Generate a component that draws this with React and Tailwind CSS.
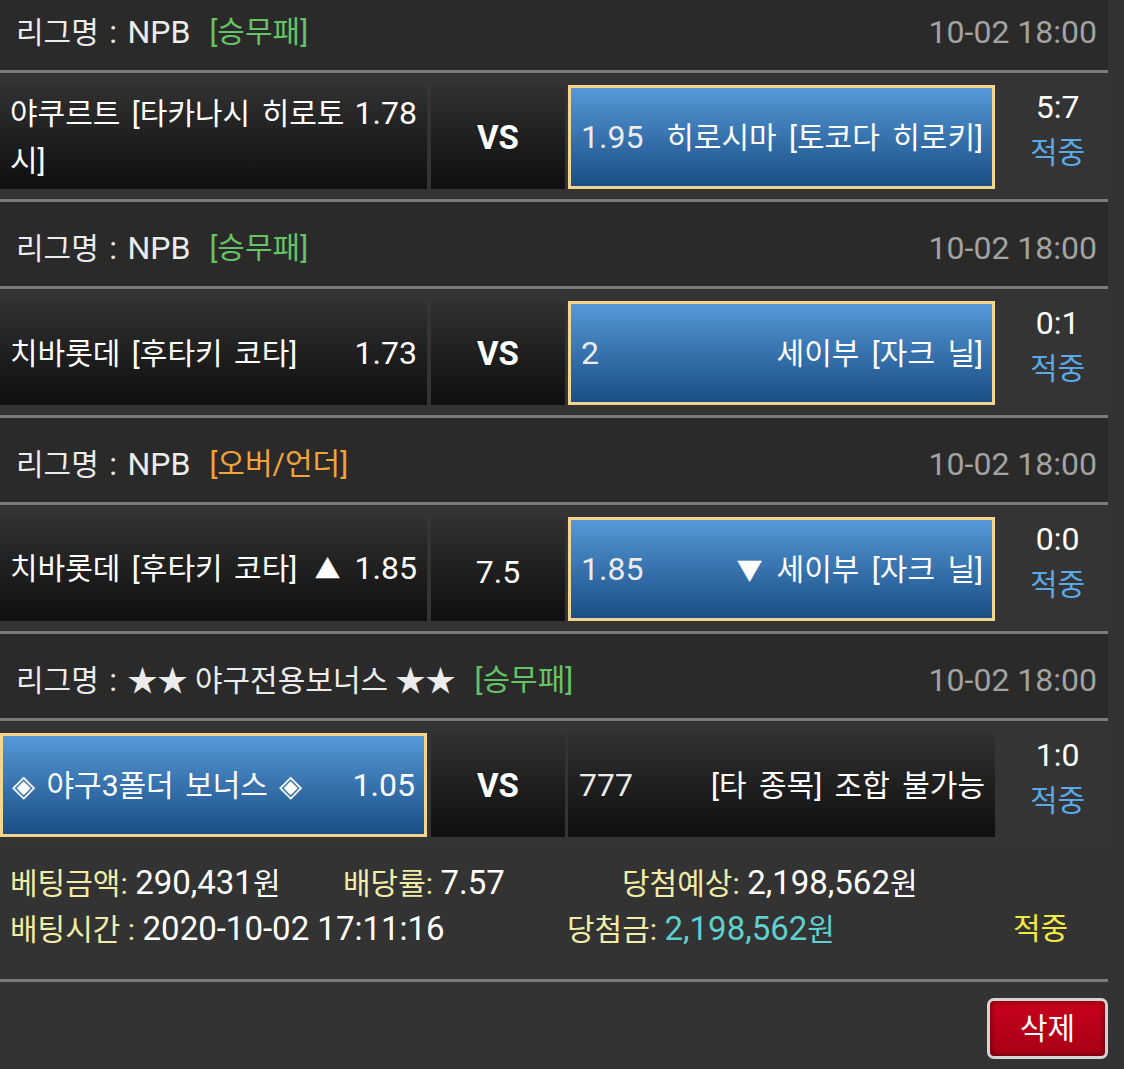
import React from "react";

const games = [
  {
    league: "NPB",
    type: "[승무패]",
    typeColor: "text-[#66c266]",
    pick: "away",
    home: "야쿠르트 [타카나시 히로토시]",
    homeOdds: "1.78",
    mid: "VS",
    away: "히로시마 [토코다 히로키]",
    awayOdds: "1.95",
    score: "5:7",
  },
  {
    league: "NPB",
    type: "[승무패]",
    typeColor: "text-[#66c266]",
    pick: "away",
    home: "치바롯데 [후타키 코타]",
    homeOdds: "1.73",
    mid: "VS",
    away: "세이부 [자크 닐]",
    awayOdds: "2",
    score: "0:1",
  },
  {
    league: "NPB",
    type: "[오버/언더]",
    typeColor: "text-[#f0a43a]",
    pick: "away",
    home: "치바롯데 [후타키 코타]",
    homeArrow: "▲",
    homeOdds: "1.85",
    mid: "7.5",
    away: "세이부 [자크 닐]",
    awayArrow: "▼",
    awayOdds: "1.85",
    score: "0:0",
  },
  {
    league: "★★ 야구전용보너스 ★★",
    type: "[승무패]",
    typeColor: "text-[#66c266]",
    pick: "home",
    home: "◈ 야구3폴더 보너스 ◈",
    homeOdds: "1.05",
    mid: "VS",
    away: "[타 종목] 조합 불가능",
    awayOdds: "777",
    score: "1:0",
  },
];

// 셀 배경: 선택된 픽은 파란색 + 금색 테두리
const Cell = ({ selected, className, children }) => (
  <div
    className={`h-[104px] flex items-center ${
      selected
        ? "border-[3px] border-[#f2d68e] bg-linear-to-b from-[#5599d8] to-[#1a4e85] px-[9px]"
        : "bg-linear-to-b from-[#313131] to-[#0f0f0f] px-[10px]"
    } ${className}`}
  >
    {children}
  </div>
);

const Line = () => <div className="h-[3px] w-[1108px] bg-[#7a7a7a]" />;

const App = () => {
  return (
    <div
      className="min-h-screen bg-[#333333] text-[30px] text-[#ececec] overflow-hidden"
      style={{ fontFamily: 'Roboto, "Noto Sans CJK KR", sans-serif' }}
    >
      <div className="w-[1108px] -mt-[14px]">
        {games.map((g, i) => (
          <div key={i}>
            {i > 0 && <Line />}
            {/* 리그 헤더 */}
            <div className="h-[84px] bg-[#2a2a2a] flex items-center justify-between pl-[16px] pr-[11px] pt-[7px]">
              <div className="flex items-center">
                <span>
                  리그명 <span className="text-[32px] px-[3px]">:</span>{" "}
                  {g.league === "NPB" ? <span className="text-[32px]">NPB</span> : g.league}
                </span>
                <span className={`ml-[19px] ${g.typeColor}`}>{g.type}</span>
              </div>
              <span className="text-[#a3a3a3] text-[32px]">10-02 18:00</span>
            </div>
            <Line />
            {/* 경기 */}
            <div className="h-[126px] pt-[12px] flex bg-[#343434]">
              <Cell selected={g.pick === "home"} className="w-[427px]">
                <div className="w-full flex justify-between items-start leading-[47px]">
                  <span className="flex-1 text-white [word-spacing:4px]">{g.home}</span>
                  <span className="text-white whitespace-nowrap">
                    {g.homeArrow && <span className="text-[26px] mr-[14px]">{g.homeArrow}</span>}
                    <span className="text-[32px]">{g.homeOdds}</span>
                  </span>
                </div>
              </Cell>
              <Cell className="w-[134px] ml-[4px] justify-center">
                <span className={g.mid === "VS" ? "font-bold text-white text-[33px] pt-[2px]" : "text-white text-[32px] pt-[6px]"}>
                  {g.mid}
                </span>
              </Cell>
              <Cell selected={g.pick === "away"} className="w-[427px] ml-[3px]">
                <div className="w-full flex justify-between items-center">
                  <span className="text-[32px] ml-[1px]">{g.awayOdds}</span>
                  <span className="text-white [word-spacing:5px]">
                    {g.awayArrow && <span className="text-[26px] mr-[14px]">{g.awayArrow}</span>}
                    {g.away}
                  </span>
                </div>
              </Cell>
              <div className="w-[113px] h-[104px] pl-[12px] flex flex-col items-center leading-[45px]">
                <span className="text-white text-[32px]">{g.score}</span>
                <span className="text-[#5aa8e4]">적중</span>
              </div>
            </div>
          </div>
        ))}
        {/* 배팅 요약 */}
        <div className="h-[132px] pt-[13px] pl-[10px] leading-[45px]">
          <div className="flex">
            <span className="w-[333px]">
              <span className="text-[#f2eca6]">베팅금액:</span>{" "}
              <span className="text-white text-[33px]">290,431</span>
              <span className="text-white">원</span>
            </span>
            <span className="w-[279px]">
              <span className="text-[#f2eca6]">배당률:</span>{" "}
              <span className="text-white text-[33px]">7.57</span>
            </span>
            <span>
              <span className="text-[#f2eca6]">당첨예상:</span>{" "}
              <span className="text-white text-[33px]">2,198,562</span>
              <span className="text-white">원</span>
            </span>
          </div>
          <div className="flex">
            <span className="w-[557px]">
              <span className="text-[#f2eca6]">배팅시간 :</span>{" "}
              <span className="text-white text-[33px]">2020-10-02 17:11:16</span>
            </span>
            <span className="w-[446px]">
              <span className="text-[#f2eca6]">당첨금:</span>{" "}
              <span className="text-[#5fd0cf]">
                <span className="text-[33px]">2,198,562</span>원
              </span>
            </span>
            <span className="text-[#f4e843]">적중</span>
          </div>
        </div>
        <Line />
        <div className="flex justify-end pt-[16px]">
          <button className="w-[121px] h-[61px] rounded-[7px] border-[3px] border-[#d4d4d4] bg-linear-to-b from-[#c8001c] to-[#a80016] shadow-[inset_0_0_6px_rgba(0,0,0,0.5)] text-white text-[30px] flex items-center justify-center">
            삭제
          </button>
        </div>
      </div>
    </div>
  );
};

export default App;
